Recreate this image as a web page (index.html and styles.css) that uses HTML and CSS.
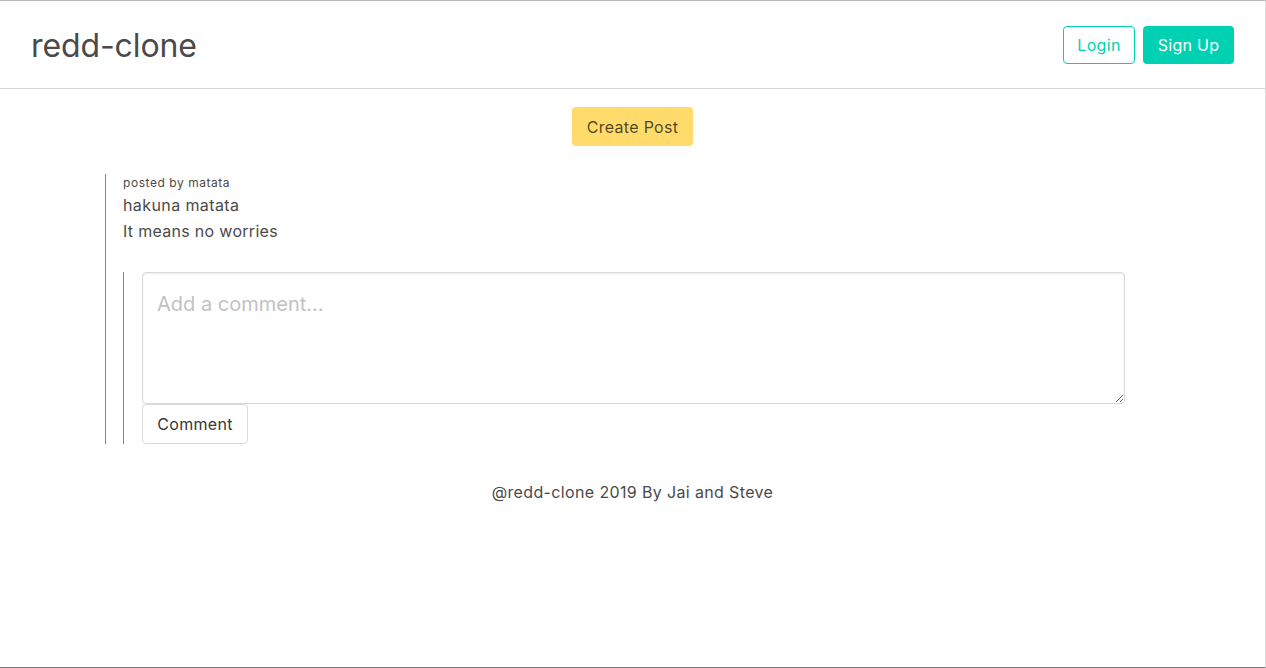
FILE: index.html
```html
<!DOCTYPE html>
<html>
<head>
<meta charset="utf-8">
<link rel="stylesheet" href="styles.css">
</head>
<body>
<div class="page">
  <nav class="navbar">
    <div class="brand">redd-clone</div>
    <div class="nav-buttons">
      <button class="btn btn-outline">Login</button>
      <button class="btn btn-primary">Sign Up</button>
    </div>
  </nav>
  <main class="main">
    <div class="create-row">
      <button class="btn btn-warning">Create Post</button>
    </div>
    <div class="post">
      <div class="post-meta">posted by matata</div>
      <div class="post-title">hakuna matata</div>
      <div class="post-body">It means no worries</div>
      <div class="comment-block">
        <textarea class="comment-input" placeholder="Add a comment..."></textarea>
        <button class="btn btn-plain">Comment</button>
      </div>
    </div>
    <footer class="footer">@redd-clone 2019 By Jai and Steve</footer>
  </main>
</div>
</body>
</html>
```
FILE: styles.css
```css
* { box-sizing: border-box; }
html, body { margin: 0; padding: 0; }
body {
  font-family: Inter, "Noto Sans", "Liberation Sans", sans-serif;
  color: #4a4a4a;
  background: #fff;
}
.page {
  width: 1266px;
  height: 668px;
  border-top: 1px solid #b8b8b8;
  border-right: 1px solid #dcdcdc;
  border-bottom: 1px solid #7a7a7a;
  display: flex;
  flex-direction: column;
}
.navbar {
  height: 88px;
  border-bottom: 1px solid #d6d6d6;
  display: flex;
  align-items: center;
  justify-content: space-between;
  padding: 0 31px 0 31px;
}
.brand {
  font-size: 32px;
  font-weight: 400;
  color: #4a4a4a;
  letter-spacing: -0.1px;
  margin-top: 2px;
}
.nav-buttons {
  display: flex;
  gap: 8px;
  margin-top: 1px;
}
.btn {
  font-family: inherit;
  font-size: 16px;
  letter-spacing: 0.3px;
  height: 38px;
  border-radius: 4px;
  padding: 0 14px;
  border: 1px solid transparent;
  cursor: pointer;
  line-height: 1;
}
.btn-outline {
  background: #fff;
  border-color: #00d1b2;
  color: #00d1b2;
  width: 72px;
  padding: 0;
}
.btn-primary {
  background: #00d1b2;
  color: #fff;
  width: 91px;
  padding: 0;
}
.btn-warning {
  background: #ffdb6b;
  color: rgba(0,0,0,0.7);
  height: 39px;
  width: 121px;
  padding: 0;
}
.btn-plain {
  background: #fff;
  border-color: #dbdbdb;
  color: #363636;
  height: 40px;
  width: 106px;
  padding: 0;
}
.main {
  display: flex;
  flex-direction: column;
}
.create-row {
  display: flex;
  justify-content: center;
  padding-top: 18px;
}
.post {
  margin: 28px 0 0 105px;
  width: 1020px;
  border-left: 1px solid #778899;
  padding-left: 17px;
}
.post-meta {
  font-size: 12px;
  line-height: 18px;
  letter-spacing: 0.55px;
}
.post-title, .post-body {
  font-size: 16px;
  line-height: 26px;
  letter-spacing: 0.4px;
}
.post-body {
  letter-spacing: 0.3px;
}
.comment-block {
  margin-top: 28px;
  border-left: 1px solid #778899;
  padding-left: 18px;
  display: flex;
  flex-direction: column;
  align-items: flex-start;
}
.comment-input {
  width: 983px;
  height: 132px;
  border: 1px solid #dbdbdb;
  border-radius: 4px;
  box-shadow: inset 0 1px 2px rgba(10,10,10,0.08);
  font-family: inherit;
  font-size: 20px;
  line-height: 1.5;
  padding: 16px 14px 14px;
  color: #363636;
  resize: vertical;
  display: block;
  margin: 0;
}
.comment-input::placeholder {
  color: #c2c2c2;
}
.footer {
  text-align: center;
  font-size: 16px;
  letter-spacing: 0.36px;
  margin-top: 38px;
  line-height: 20px;
}
```
